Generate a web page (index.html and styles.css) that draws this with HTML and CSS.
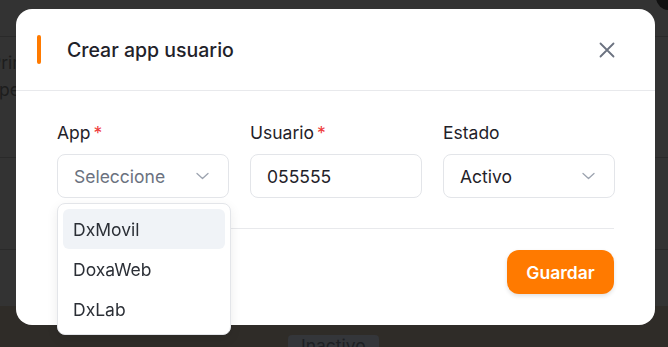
FILE: index.html
```html
<!DOCTYPE html>
<html>
<head>
  <title>Crear app usuario</title>
  <link rel="stylesheet" href="styles.css">
</head>
<body>
  <div class="page">
    <div class="page-row page-top">
      <span class="page-avatar"></span>
    </div>
    <div class="page-row page-head">
      <div class="page-cell first">Prim</div>
      <div class="page-cell">pe</div>
    </div>
    <div class="page-row page-mid"></div>
    <div class="page-row page-low"></div>
    <div class="page-foot">
      <span class="page-badge">Inactivo</span>
    </div>
  </div>

  <div class="overlay">
    <div class="modal">
      <div class="modal-header">
        <span class="modal-mark"></span>
        <h2 class="modal-title">Crear app usuario</h2>
        <button class="modal-close" aria-label="Cerrar">
          <svg width="16" height="16" viewBox="0 0 16 16" fill="none" stroke="currentColor" stroke-width="1.8" stroke-linecap="round">
            <path d="M1.5 1.5 L14.5 14.5 M14.5 1.5 L1.5 14.5"/>
          </svg>
        </button>
      </div>

      <div class="modal-body">
        <div class="form-grid">
          <div class="field">
            <label class="field-label">App<span class="req">*</span></label>
            <div class="select">
              <span class="placeholder">Seleccione</span>
              <svg class="chevron" width="13" height="8" viewBox="0 0 13 8" fill="none" stroke="currentColor" stroke-width="1.3" stroke-linecap="round" stroke-linejoin="round">
                <path d="M1 1.5 L6.5 6.5 L12 1.5"/>
              </svg>
            </div>
            <div class="dropdown">
              <div class="option active">DxMovil</div>
              <div class="option">DoxaWeb</div>
              <div class="option">DxLab</div>
            </div>
          </div>
          <div class="field">
            <label class="field-label">Usuario<span class="req">*</span></label>
            <div class="input">055555</div>
          </div>
          <div class="field">
            <label class="field-label">Estado</label>
            <div class="select">
              <span>Activo</span>
              <svg class="chevron" width="13" height="8" viewBox="0 0 13 8" fill="none" stroke="currentColor" stroke-width="1.3" stroke-linecap="round" stroke-linejoin="round">
                <path d="M1 1.5 L6.5 6.5 L12 1.5"/>
              </svg>
            </div>
          </div>
        </div>

        <div class="modal-footer">
          <button class="save-button">Guardar</button>
        </div>
      </div>
    </div>
  </div>
</body>
</html>
```

FILE: styles.css
```css
* {
  box-sizing: border-box;
  margin: 0;
  padding: 0;
}

body {
  font-family: Inter, "Noto Sans", sans-serif;
  background-color: #333333;
  width: 668px;
  height: 347px;
  overflow: hidden;
}

/* page behind the overlay */
.page {
  display: flex;
  flex-direction: column;
  height: 347px;
}

.page-row {
  flex-shrink: 0;
  border-bottom: 1px solid #2a2a2a;
}

.page-top {
  height: 37px;
  display: flex;
  justify-content: flex-end;
}

.page-avatar {
  width: 26px;
  height: 26px;
  margin: -16px -14px 0 0;
  border-radius: 50%;
  background-color: #111;
}

.page-head {
  height: 121px;
  padding-top: 12px;
}

.page-cell {
  font-size: 17.5px;
  line-height: 27px;
  color: #1d1d1d;
  margin-left: -1px;
  white-space: nowrap;
}

.page-cell.first {
  margin-left: -10px;
}

.page-mid {
  height: 92px;
}

.page-low {
  height: 56px;
  border: none;
}

.page-foot {
  flex: 1;
  background-color: #2f2c28;
  padding: 29px 0 0 288px;
}

.page-badge {
  display: inline-block;
  padding: 0 13px;
  font-size: 17.5px;
  line-height: 22px;
  color: #1d1f23;
  background-color: #34363a;
  border-radius: 4px;
}

/* modal */
.overlay {
  position: fixed;
  inset: 0;
}

.modal {
  position: absolute;
  left: 16px;
  top: 9px;
  width: 639px;
  height: 316px;
  background-color: #fff;
  border-radius: 16px;
}

.modal-header {
  display: flex;
  align-items: center;
  height: 82px;
  padding: 0 40px 0 21px;
  border-bottom: 1px solid #e8e9ec;
}

.modal-mark {
  width: 4px;
  height: 29px;
  border-radius: 2px;
  background-color: #ff7a00;
  margin-right: 26px;
}

.modal-title {
  flex: 1;
  font-size: 19.5px;
  font-weight: 500;
  color: #1f2229;
}

.modal-close {
  display: flex;
  border: none;
  background: none;
  color: #6b7280;
  cursor: pointer;
}

.modal-body {
  padding: 30px 41px 31px;
}

.form-grid {
  display: grid;
  grid-template-columns: 172px 172px 172px;
  column-gap: 21px;
  padding-bottom: 30px;
  border-bottom: 1px solid #e8e9ec;
}

.field {
  position: relative;
  display: flex;
  flex-direction: column;
}

.field-label {
  font-size: 17.5px;
  line-height: 24px;
  color: #1f2229;
  margin-bottom: 9px;
}

.req {
  color: #ef3b3b;
  margin-left: 3px;
}

.select,
.input {
  display: flex;
  align-items: center;
  justify-content: space-between;
  height: 44px;
  padding: 0 19px 0 16px;
  border: 1px solid #e3e5e9;
  border-radius: 8px;
  font-size: 17.5px;
  color: #1f2229;
  background-color: #fff;
}

.placeholder {
  color: #6b7280;
}

.chevron {
  color: #9ca3af;
}

.dropdown {
  position: absolute;
  top: 82px;
  left: 0;
  width: 174px;
  padding: 5px;
  background-color: #fff;
  border: 1px solid #e3e5e9;
  border-radius: 8px;
  box-shadow: 0 4px 12px rgba(0, 0, 0, 0.08);
  z-index: 2;
}

.option {
  height: 40px;
  display: flex;
  align-items: center;
  padding-left: 10px;
  border-radius: 6px;
  font-size: 17.5px;
  color: #2b2f36;
}

.option.active {
  background-color: #f0f3f7;
}

.modal-footer {
  display: flex;
  justify-content: flex-end;
  padding-top: 21px;
}

.save-button {
  width: 107px;
  height: 44px;
  border: none;
  border-radius: 12px;
  background-color: #ff7a00;
  color: #fff;
  font-family: inherit;
  font-size: 17.5px;
  font-weight: 600;
  cursor: pointer;
  box-shadow: 0 2px 4px rgba(0, 0, 0, 0.12);
}
```
